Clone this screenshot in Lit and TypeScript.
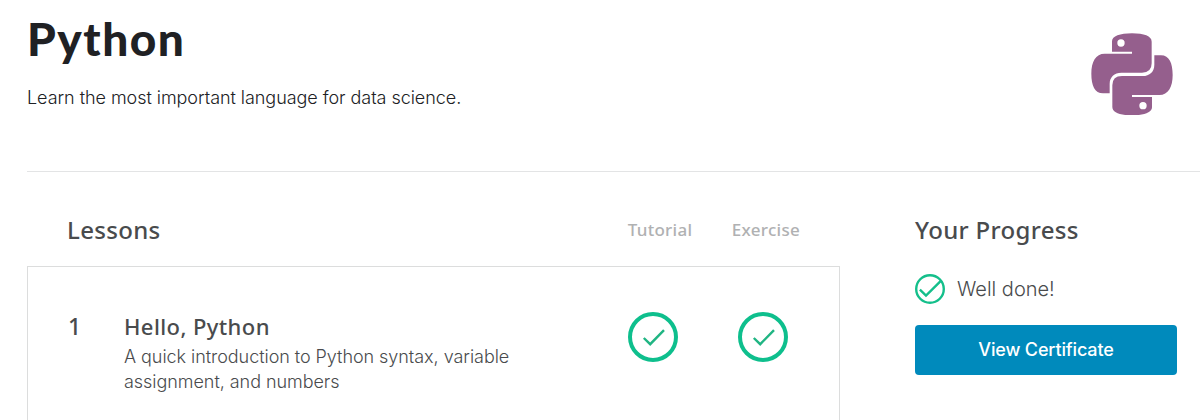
import { LitElement, html, css, svg } from "lit";
import { customElement, property } from "lit/decorators.js";

const SNAKE =
  "M97 64C97 48 121 40 157 40C193 40 216 48 216 65V130Q216 158 187 158H125C104 158 90 171 90 192V220H70C45 220 35 196 35 161C35 125 48 101 75 101H157V95H97ZM124 58A11 11 0 1 0 124 80A11 11 0 1 0 124 58Z";

@customElement("python-logo")
export class PythonLogo extends LitElement {
  static styles = css`
    :host { display: block; width: 82px; height: 82px; }
    svg { display: block; }
  `;
  render() {
    return html`<svg width="82" height="82" viewBox="34 39 246 246" fill="#955f8d" fill-rule="evenodd">
      <path d=${SNAKE}></path>
      ${svg`<path d=${SNAKE} transform="rotate(180 157 163)"></path>`}
    </svg>`;
  }
}

@customElement("done-mark")
export class DoneMark extends LitElement {
  @property() size = "large";
  static styles = css`
    :host { display: block; }
    svg { display: block; }
  `;
  render() {
    return this.size === "small"
      ? html`<svg width="30" height="30" viewBox="0 0 30 30" fill="none" stroke="#14bf8b" stroke-width="2.4">
          <circle cx="15" cy="15" r="13.8"></circle>
          <path d="M4.9 15.6L11 21.6L25.6 7.1"></path>
        </svg>`
      : html`<svg width="50" height="50" viewBox="0 0 50 50" fill="none" stroke="#0ebf8d">
          <circle cx="25" cy="25" r="23" stroke-width="4"></circle>
          <path d="M15.8 26L22.2 32.2L36 18.2" stroke="#20b583" stroke-width="2.4"></path>
        </svg>`;
  }
}

@customElement("app-root")
export class AppRoot extends LitElement {
  static styles = css`
    :host {
      display: block;
      height: 420px;
      overflow: hidden;
      background: #fff;
      color: #494b4d;
      font-family: Inter, "Liberation Sans", sans-serif;
      font-weight: 300;
    }
    h1, h2, h3, p { margin: 0; }
    h1 { font-family: Lato, sans-serif; }
    h2, h3, .num, .col { font-family: "Noto Sans", sans-serif; white-space: nowrap; font-weight: 500; }
    .head {
      display: flex;
      justify-content: space-between;
      box-sizing: border-box;
      margin-left: 27px;
      padding-right: 27px;
      border-bottom: 1px solid #e3e4e5;
      height: 172px;
    }
    .intro { padding-top: 11px; }
    h1 { font-size: 46px; line-height: 56px; font-weight: 900; color: #202124; letter-spacing: 1.5px; }
    .sub { margin-top: 18px; font-size: 18px; letter-spacing: -0.05px; line-height: 26px; color: #202124; }
    python-logo { margin-top: 33px; }
    .body { display: flex; margin-left: 27px; }
    .lessons { width: 813px; }
    .bar { display: flex; align-items: center; height: 94px; padding: 0 40px; box-sizing: border-box; }
    .bar h2 { flex: 1; }
    h2 { font-size: 24px; line-height: 30px; letter-spacing: 0.33px; }
    .bar h2 { margin-top: 21px; }
    .col { margin-top: 22px; font-size: 17px; line-height: 24px; color: #b0b1b2; letter-spacing: 0.28px; }
    .col + .col { margin-left: 39.5px; }
    .card {
      display: flex;
      box-sizing: border-box;
      height: 200px;
      border: 1px solid #dcdddd;
      padding: 45px 51px 0 40px;
    }
    .num { width: 56px; font-size: 23px; line-height: 28px; }
    .text { width: 410px; }
    h3 { font-size: 22px; line-height: 29px; letter-spacing: 0.4px; }
    .desc { font-size: 18px; letter-spacing: -0.05px; line-height: 25px; margin-top: 3px; }
    .marks { display: flex; gap: 60px; margin-left: auto; }
    .progress { width: 262px; margin-left: 75px; }
    .progress h2 { margin-top: 43px; }
    .done { display: flex; align-items: center; gap: 12px; height: 30px; margin-top: 29px; font-size: 20px; }
    .button {
      display: block;
      width: 262px;
      height: 50px;
      margin-top: 21px;
      border: 0;
      border-radius: 4px;
      background: #008abc;
      color: #fff;
      font: 500 18px/50px Inter, sans-serif;
      letter-spacing: -0.15px;
      padding: 0;
    }
  `;
  render() {
    return html`
      <header class="head">
        <div class="intro">
          <h1><span>Python</span></h1>
          <p class="sub"><span>Learn the most important language for data science.</span></p>
        </div>
        <python-logo></python-logo>
      </header>
      <main class="body">
        <section class="lessons">
          <div class="bar">
            <h2><span>Lessons</span></h2>
            <span class="col">Tutorial</span>
            <span class="col">Exercise</span>
          </div>
          <article class="card">
            <div class="num">1</div>
            <div class="text">
              <h3><span>Hello, Python</span></h3>
              <p class="desc">A quick introduction to Python syntax, variable<br />assignment, and numbers</p>
            </div>
            <div class="marks"><done-mark></done-mark><done-mark></done-mark></div>
          </article>
        </section>
        <aside class="progress">
          <h2><span>Your Progress</span></h2>
          <div class="done"><done-mark size="small"></done-mark><span>Well done!</span></div>
          <button class="button">View Certificate</button>
        </aside>
      </main>
    `;
  }
}
